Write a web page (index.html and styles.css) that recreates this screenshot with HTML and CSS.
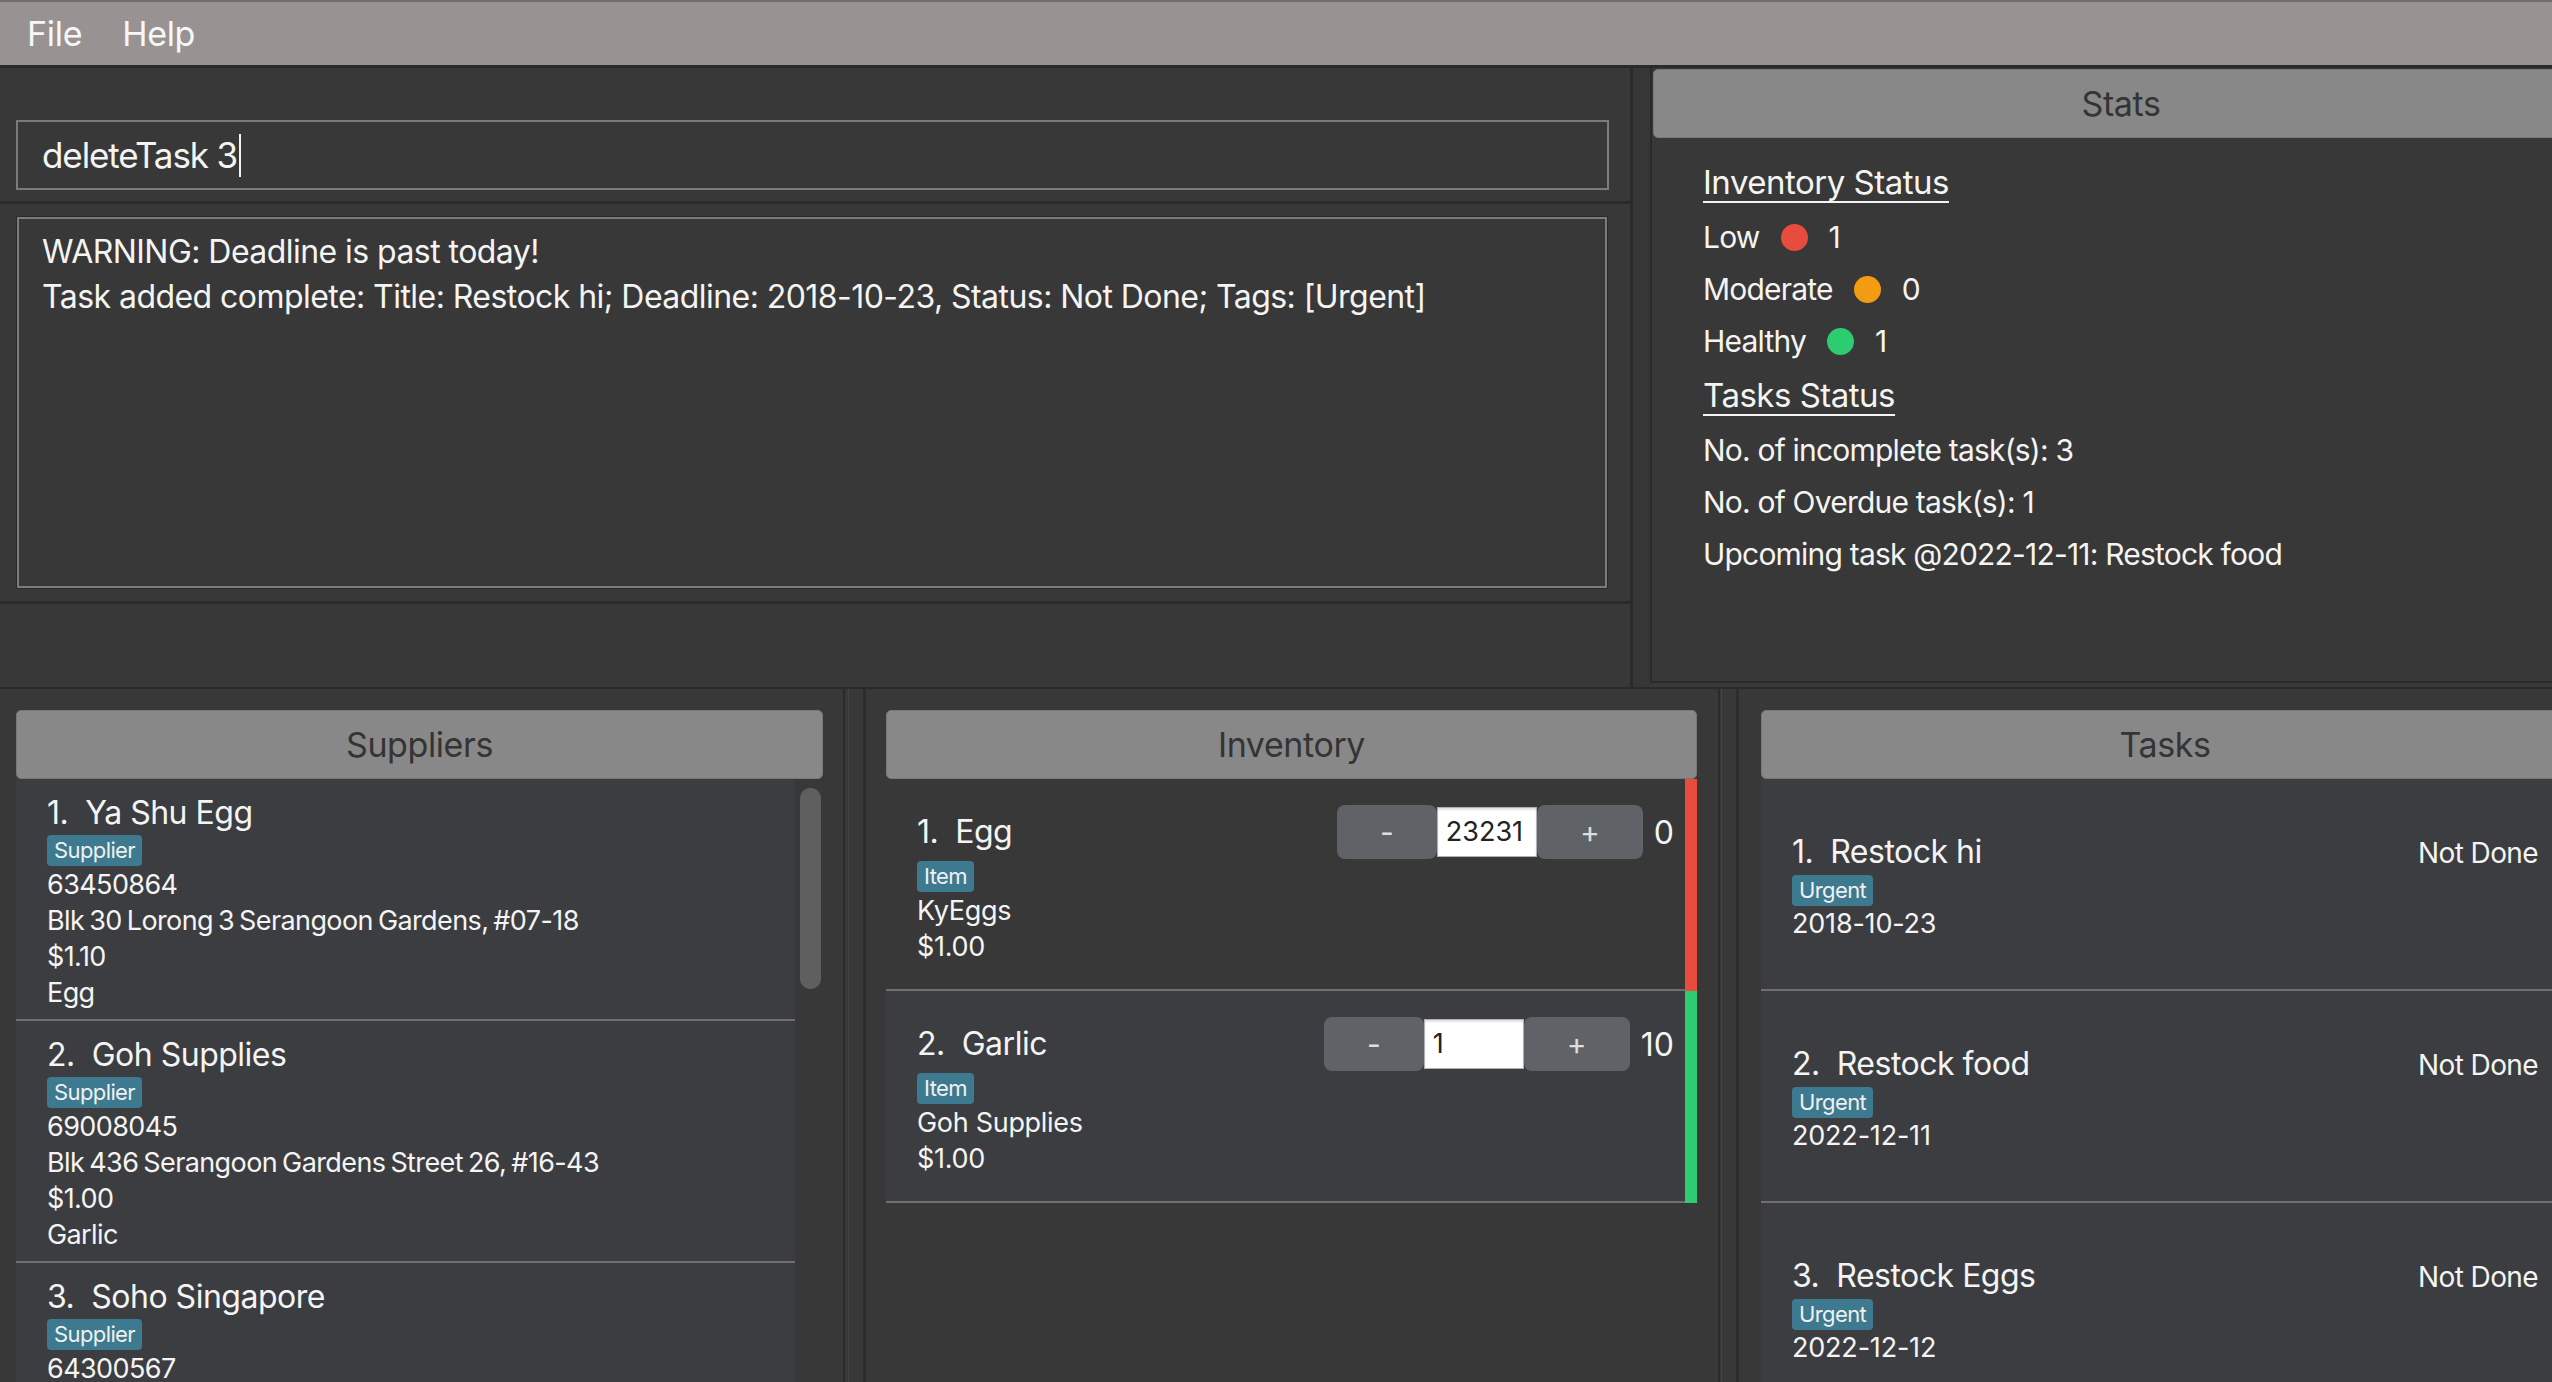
FILE: index.html
```html
<!DOCTYPE html>
<html>
<head>
<meta charset="utf-8">
<title>Inventory</title>
<link rel="stylesheet" href="styles.css">
</head>
<body>
<div class="menubar">
  <span class="menu-item">File</span>
  <span class="menu-item">Help</span>
</div>

<div class="top">
  <div class="top-left">
    <div class="cmd-area">
      <div class="cmd"><span class="cmd-text">deleteTask 3</span><span class="caret"></span></div>
    </div>
    <div class="result-area">
      <div class="result">
        <div>WARNING: Deadline is past today!</div>
        <div>Task added complete: Title: Restock hi; Deadline: 2018-10-23, Status: Not Done; Tags: [Urgent]</div>
      </div>
    </div>
    <div class="status-area"></div>
  </div>
  <div class="stats-gap"></div>
  <div class="stats">
    <div class="panel-header stats-header">Stats</div>
    <div class="stats-body">
      <div class="stats-heading">Inventory Status</div>
      <div class="stats-row"><span>Low</span><span class="dot dot-red"></span><span>1</span></div>
      <div class="stats-row"><span>Moderate</span><span class="dot dot-orange"></span><span>0</span></div>
      <div class="stats-row"><span>Healthy</span><span class="dot dot-green"></span><span>1</span></div>
      <div class="stats-heading">Tasks Status</div>
      <div class="stats-row">No. of incomplete task(s): 3</div>
      <div class="stats-row">No. of Overdue task(s): 1</div>
      <div class="stats-row">Upcoming task @2022-12-11: Restock food</div>
    </div>
  </div>
</div>

<div class="bottom">
  <div class="col col-suppliers">
    <div class="panel-header">Suppliers</div>
    <div class="sup-list">
      <div class="sup-cards">
        <div class="sup-card">
          <div class="card-title">1.  Ya Shu Egg</div>
          <div><span class="tag">Supplier</span></div>
          <div class="card-line">63450864</div>
          <div class="card-line">Blk 30 Lorong 3 Serangoon Gardens, #07-18</div>
          <div class="card-line">$1.10</div>
          <div class="card-line">Egg</div>
        </div>
        <div class="sup-card">
          <div class="card-title">2.  Goh Supplies</div>
          <div><span class="tag">Supplier</span></div>
          <div class="card-line">69008045</div>
          <div class="card-line">Blk 436 Serangoon Gardens Street 26, #16-43</div>
          <div class="card-line">$1.00</div>
          <div class="card-line">Garlic</div>
        </div>
        <div class="sup-card sup-card-last">
          <div class="card-title">3.  Soho Singapore</div>
          <div><span class="tag">Supplier</span></div>
          <div class="card-line">64300567</div>
        </div>
      </div>
      <div class="scroll-lane"><div class="scroll-thumb"></div></div>
    </div>
  </div>

  <div class="vdivider"></div>

  <div class="col col-inventory">
    <div class="col-inner">
      <div class="panel-header">Inventory</div>
      <div class="inv-card">
        <div class="inv-main">
          <div class="inv-head">
            <div class="card-title inv-title">1.  Egg</div>
            <div class="qty-ctrl">
              <div class="qbtn qbtn-minus">-</div>
              <div class="qty-input">23231</div>
              <div class="qbtn qbtn-plus">+</div>
            </div>
            <div class="inv-count">0</div>
          </div>
          <div><span class="tag">Item</span></div>
          <div class="card-line inv-line">KyEggs</div>
          <div class="card-line inv-line">$1.00</div>
        </div>
        <div class="inv-bar bar-red"></div>
      </div>
      <div class="inv-card inv-card-alt">
        <div class="inv-main">
          <div class="inv-head">
            <div class="card-title inv-title">2.  Garlic</div>
            <div class="qty-ctrl">
              <div class="qbtn qbtn-minus">-</div>
              <div class="qty-input">1</div>
              <div class="qbtn qbtn-plus">+</div>
            </div>
            <div class="inv-count">10</div>
          </div>
          <div><span class="tag">Item</span></div>
          <div class="card-line inv-line">Goh Supplies</div>
          <div class="card-line inv-line">$1.00</div>
        </div>
        <div class="inv-bar bar-green"></div>
      </div>
    </div>
  </div>

  <div class="vdivider vdivider-2"></div>

  <div class="col col-tasks">
    <div class="col-inner col-inner-tasks">
      <div class="panel-header task-header">Tasks</div>
      <div class="task-card">
        <div class="task-head"><span class="card-title">1.  Restock hi</span><span class="task-status">Not Done</span></div>
        <div><span class="tag">Urgent</span></div>
        <div class="task-date">2018-10-23</div>
      </div>
      <div class="task-card">
        <div class="task-head"><span class="card-title">2.  Restock food</span><span class="task-status">Not Done</span></div>
        <div><span class="tag">Urgent</span></div>
        <div class="task-date">2022-12-11</div>
      </div>
      <div class="task-card">
        <div class="task-head"><span class="card-title">3.  Restock Eggs</span><span class="task-status">Not Done</span></div>
        <div><span class="tag">Urgent</span></div>
        <div class="task-date">2022-12-12</div>
      </div>
    </div>
  </div>
</div>
</body>
</html>
```
FILE: styles.css
```css
* { box-sizing: border-box; }
html, body { margin: 0; padding: 0; }
body {
  width: 2552px;
  height: 1382px;
  overflow: hidden;
  background: #383838;
  font-family: Inter, "Noto Sans", sans-serif;
  color: #f4f4f4;
}

/* menu bar */
.menubar {
  height: 65px;
  background: #989392;
  border-top: 2px solid #6f6b6a;
  display: flex;
  gap: 40px;
  padding-left: 27px;
  font-size: 34px;
  letter-spacing: -0.3px;
  line-height: 63px;
  color: #f7f7f7;
}

/* top section */
.top {
  display: flex;
  height: 622px;
  border-top: 3px solid #2a2a2a;
}
.top-left {
  width: 1633px;
  flex-shrink: 0;
  border-right: 3px solid #2a2a2a;
  display: flex;
  flex-direction: column;
}
.cmd-area {
  height: 136px;
  padding: 52px 21px 0 16px;
  border-bottom: 3px solid #2a2a2a;
}
.cmd {
  height: 70px;
  border: 2px solid #7b7b7b;
  padding-left: 24px;
  font-size: 35px;
  letter-spacing: -1.1px;
  line-height: 62px;
  display: flex;
  align-items: center;
}
.caret {
  display: inline-block;
  width: 2px;
  height: 43px;
  background: #f2f2f2;
  margin-left: 2px;
}
.result-area {
  height: 400px;
  padding: 13px 23px 0 17px;
  border-bottom: 3px solid #2a2a2a;
}
.result {
  height: 371px;
  border: 2px solid #7b7b7b;
  box-shadow: 0 0 0 1px #2a2a2a;
  padding: 10px 0 0 23px;
  font-size: 32px;
  letter-spacing: -0.55px;
  line-height: 45px;
}
.status-area { flex: 1; }

.stats-gap {
  width: 17px;
  flex-shrink: 0;
  background: #363636;
}
.stats {
  width: 1000px;
  flex-shrink: 0;
  height: 615px;
  border-left: 2px solid #2a2a2a;
  border-bottom: 2px solid #2a2a2a;
  padding: 1px 0 0 1px;
}
.panel-header {
  height: 69px;
  background: #888888;
  border: 1px solid #777777;
  border-radius: 5px;
  color: #343434;
  font-size: 34px;
  letter-spacing: -0.4px;
  line-height: 67px;
  text-align: center;
}
.stats-header { width: 936px; }
.stats-body { padding: 16px 0 0 50px; }
.stats-heading {
  font-size: 33px;
  letter-spacing: -0.5px;
  line-height: 56px;
  text-decoration: underline;
  text-decoration-thickness: 2px;
  text-underline-offset: 7px;
}
.stats-heading + .stats-row { margin-top: 1px; }
.stats-row {
  font-size: 30px;
  letter-spacing: -0.8px;
  line-height: 52px;
  display: flex;
  align-items: center;
  gap: 21px;
}
.dot {
  width: 27px;
  height: 27px;
  border-radius: 50%;
}
.dot-red { background: #e74c3c; }
.dot-orange { background: #f39c12; }
.dot-green { background: #2ecc71; }

/* bottom section */
.bottom {
  display: flex;
  height: 695px;
  border-top: 2px solid #2a2a2a;
}
.col { flex-shrink: 0; }
.col-suppliers {
  width: 843px;
  padding: 21px 20px 0 16px;
}
.vdivider {
  width: 6px;
  flex-shrink: 0;
  border-left: 2px solid #2a2a2a;
  border-right: 1px solid #444444;
}
.vdivider-2 { width: 4px; }
.col-inventory {
  width: 869px;
  display: flex;
}
.col-inner {
  flex: 1;
  margin-left: 14px;
  border-left: 3px solid #2d2d2d;
  padding: 21px 21px 0 20px;
}
.col-tasks {
  width: 900px;
  display: flex;
}
.col-inner-tasks { padding-left: 22px; padding-right: 0; }
.task-header { width: 808px; }

.sup-list { display: flex; }
.sup-cards { width: 779px; }
.scroll-lane { width: 28px; padding: 9px 2px 0 5px; }
.scroll-thumb {
  width: 21px;
  height: 201px;
  background: #5f5f5f;
  border-radius: 10px;
}

.sup-card {
  height: 242px;
  background: #3c3d40;
  border-bottom: 2px solid #6f6f6f;
  padding: 14px 0 0 31px;
}
.sup-card-last { height: 120px; border-bottom: 0; }
.card-title {
  font-size: 32px;
  letter-spacing: -0.5px;
  line-height: 40px;
  white-space: pre;
}
.tag {
  display: inline-block;
  height: 31px;
  line-height: 31px;
  margin-top: 2px;
  padding: 0 7px;
  background: #3d7a8f;
  border-radius: 4px;
  font-size: 22px;
  letter-spacing: -0.6px;
  color: #f0f0f0;
}
.card-line {
  font-size: 27px;
  letter-spacing: -0.6px;
  word-spacing: -2px;
  line-height: 36px;
  padding-top: 1px;
  height: 36px;
}
.inv-line { letter-spacing: -0.3px; word-spacing: 0; }

/* inventory */
.inv-card {
  height: 212px;
  display: flex;
  background: #383838;
}
.inv-card-alt { background: #3c3d40; }
.inv-main {
  flex: 1;
  border-bottom: 2px solid #6f6f6f;
  padding: 26px 11px 0 31px;
}
.inv-bar { width: 12px; }
.bar-red { background: #e74c3c; }
.bar-green { background: #2ecc71; }
.inv-head {
  display: flex;
  align-items: center;
  height: 54px;
}
.inv-title { flex: 1; }
.qty-ctrl { display: flex; align-items: center; }
.qbtn {
  height: 54px;
  width: 100px;
  background: #5f6367;
  border-radius: 8px;
  color: #dddddd;
  font-size: 30px;
  display: flex;
  align-items: center;
  justify-content: center;
}
.qbtn-plus { width: 106px; }
.qty-input {
  width: 100px;
  height: 50px;
  background: #ffffff;
  border: 1px solid #b0b0b0;
  box-shadow: inset 0 2px 2px rgba(0,0,0,0.12);
  color: #222222;
  font-size: 27px;
  line-height: 48px;
  padding-left: 8px;
}
.inv-count {
  margin-left: 11px;
  font-size: 32px;
}

/* tasks */
.task-card {
  width: 808px;
  height: 212px;
  background: #3c3d40;
  border-bottom: 2px solid #6f6f6f;
  padding: 6px 31px 0;
  display: flex;
  flex-direction: column;
  justify-content: center;
}
.task-head {
  display: flex;
  justify-content: space-between;
  align-items: baseline;
}
.task-status {
  font-size: 28px;
  letter-spacing: -0.6px;
  line-height: 40px;
}
.task-date {
  font-size: 27px;
  letter-spacing: -0.2px;
  line-height: 36px;
}
```
